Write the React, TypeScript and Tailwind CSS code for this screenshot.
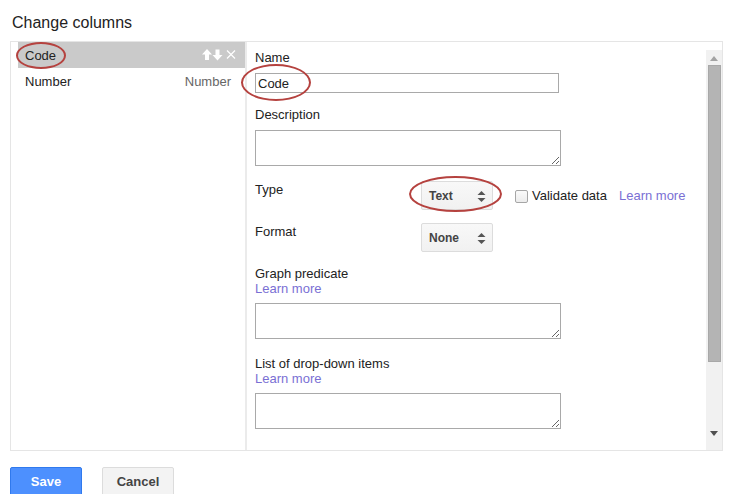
const SelectBox = ({ label }: { label: string }) => (
  <div className="relative w-[72px] h-[29px] rounded-[2px] border border-[#dcdcdc] bg-gradient-to-b from-[#f8f8f8] to-[#f1f1f1] text-[12px] font-bold text-[#444] leading-[28px] pl-[7px]">
    {label}
    <svg className="absolute right-[6px] top-[9px]" width="9" height="11" viewBox="0 0 9 11">
      <path d="M4.5 0 L8.5 4 L0.5 4 Z" fill="#555" />
      <path d="M4.5 11 L8.5 7 L0.5 7 Z" fill="#555" />
    </svg>
  </div>
);

const Area = () => (
  <textarea
    readOnly
    className="block w-[306px] h-[36px] border border-[#a9a9a9] resize outline-none"
  />
);

const LearnMore = ({ className = '' }: { className?: string }) => (
  <span className={`text-[#7a6fd4] ${className}`}>Learn more</span>
);

export default function App() {
  return (
    <div className="relative w-[731px] h-[494px] bg-white overflow-hidden font-['Liberation_Sans',Arial,sans-serif] text-[13px] text-[#222]">
      <div className="h-[41px] pl-[12px] pt-[13px] text-[16px] leading-[20px] text-[#222]">Change columns</div>

      <div className="ml-[10px] w-[713px] h-[410px] border border-[#e5e5e5] flex">
        {/* column list */}
        <div className="w-[236px] pl-[7px] border-r-2 border-[#ebebeb]">
          <div className="h-[26px] bg-[#cacaca] flex items-center pl-[7px] pr-[8px] pt-[2px]">
            <span className="flex-1">Code</span>
            <svg className="-mt-[3px]" width="35" height="12" viewBox="0 0 35 12">
              <path d="M5 0 L10 5.5 L7 5.5 L7 11 L3 11 L3 5.5 L0 5.5 Z" fill="#fff" />
              <path d="M15.5 11.5 L20.5 6 L17.5 6 L17.5 0.5 L13.5 0.5 L13.5 6 L10.5 6 Z" fill="#fff" />
              <path d="M25 1.5 L33 9.5 M33 1.5 L25 9.5" stroke="#fff" strokeWidth="1.2" />
            </svg>
          </div>
          <div className="h-[26px] flex items-center pl-[7px] pr-[14px] pt-[2px]">
            <span className="flex-1">Number</span>
            <span className="text-[#666]">Number</span>
          </div>
        </div>

        {/* details */}
        <div className="flex-1 flex">
          <div className="flex-1 pl-[8px] pt-[8px] leading-[16px]">
            <div>Name</div>
            <div className="mt-[7px] w-[304px] h-[20px] border border-[#a9a9a9] pl-[2px] leading-[19px]">Code</div>
            <div className="mt-[14px]">Description</div>
            <div className="mt-[7px]">
              <Area />
            </div>

            <div className="mt-[15px] flex items-start">
              <div className="w-[166px] pt-[1px]">Type</div>
              <SelectBox label="Text" />
              <div className="flex items-center ml-[22px] mt-[7px]">
                <span className="w-[13px] h-[13px] rounded-[2px] border border-[#a6a6a6] bg-gradient-to-b from-[#fafafa] to-[#ececec]" />
                <span className="ml-[4px]">Validate data</span>
                <LearnMore className="ml-[12px]" />
              </div>
            </div>

            <div className="mt-[13px] flex items-start">
              <div className="w-[166px] pt-[1px]">Format</div>
              <SelectBox label="None" />
            </div>

            <div className="mt-[14px] leading-[15px]">Graph predicate</div>
            <div className="leading-[15px]">
              <LearnMore />
            </div>
            <div className="mt-[7px]">
              <Area />
            </div>

            <div className="mt-[17px] leading-[15px]">List of drop-down items</div>
            <div className="leading-[15px]">
              <LearnMore />
            </div>
            <div className="mt-[7px]">
              <Area />
            </div>
          </div>

          {/* scrollbar */}
          <div className="w-[16px] mt-[8px] bg-[#f1f1f1] flex flex-col items-center">
            <svg className="mt-[6px]" width="8" height="5" viewBox="0 0 8 5">
              <path d="M4 0 L8 5 L0 5 Z" fill="#a3a3a3" />
            </svg>
            <div className="mt-[4px] ml-[1px] w-[13px] h-[297px] bg-[#b4b4b4] border border-[#a8a8a8]" />
            <div className="flex-1" />
            <svg className="mb-[14px]" width="8" height="5" viewBox="0 0 8 5">
              <path d="M0 0 L8 0 L4 5 Z" fill="#505050" />
            </svg>
          </div>
        </div>
      </div>

      <div className="mt-[16px] ml-[10px] flex gap-[20px]">
        <button className="w-[72px] h-[29px] rounded-[2px] border border-[#3079ed] bg-[#4d90fe] text-white font-bold text-[13px]">
          Save
        </button>
        <button className="w-[72px] h-[29px] rounded-[2px] border border-[#dcdcdc] bg-[#f3f3f3] text-[#444] font-bold text-[13px]">
          Cancel
        </button>
      </div>

      {/* annotation ellipses */}
      <div className="absolute left-[16px] top-[42px] w-[50px] h-[27px] rounded-[50%] border-[2.5px] border-[#b5423f]" />
      <div className="absolute left-[241px] top-[64px] w-[70px] h-[37px] rounded-[50%] border-[2.5px] border-[#b5423f]" />
      <div className="absolute left-[409px] top-[176px] w-[93px] h-[36px] rounded-[50%] border-[2.5px] border-[#b5423f]" />
    </div>
  );
}
